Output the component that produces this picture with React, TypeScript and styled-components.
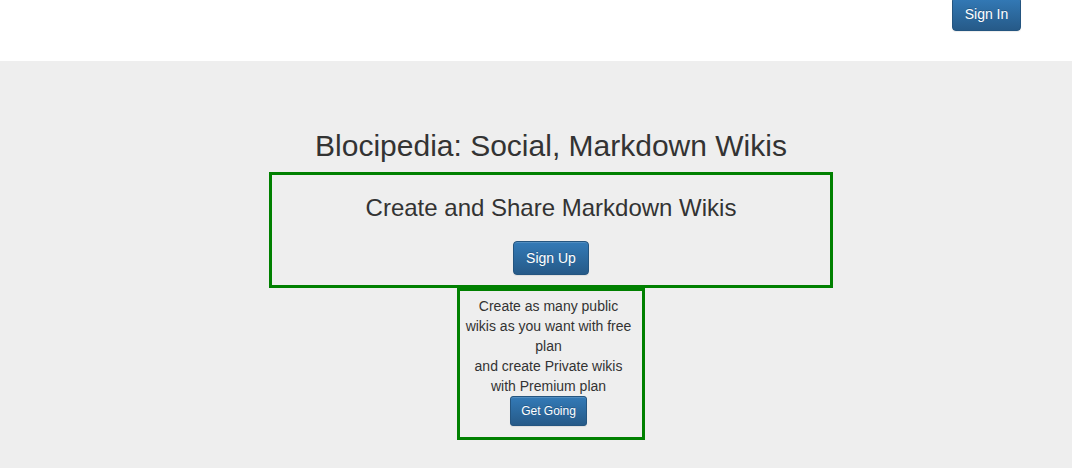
import React from "react";
import styled, { createGlobalStyle } from "styled-components";

const Global = createGlobalStyle`
  html, body { margin: 0; padding: 0; background: #ffffff; }
  body {
    font-family: "Liberation Sans", Arial, Helvetica, sans-serif;
    font-size: 14px;
    line-height: 20px;
    color: #333333;
  }
  * { box-sizing: border-box; }
`;

const Header = styled.header`
  height: 61px;
  background: #ffffff;
  display: flex;
  justify-content: flex-end;
  align-items: flex-start;
  padding-right: 51px;
`;

const Button = styled.button<{ $small?: boolean }>`
  font-family: "Liberation Sans", Arial, Helvetica, sans-serif;
  font-size: ${(p) => (p.$small ? "12px" : "14px")};
  line-height: ${(p) => (p.$small ? "18px" : "20px")};
  padding: ${(p) => (p.$small ? "5px 10px" : "6px 12px")};
  border-radius: ${(p) => (p.$small ? "3px" : "4px")};
  color: #ffffff;
  border: 1px solid #245580;
  background-color: #265a88;
  background-image: linear-gradient(to bottom, #337ab7 0, #265a88 100%);
  box-shadow: inset 0 1px 0 rgba(255, 255, 255, 0.15), 0 1px 1px rgba(0, 0, 0, 0.075);
  text-shadow: 0 -1px 0 rgba(0, 0, 0, 0.2);
  cursor: pointer;
  white-space: nowrap;
`;

const HeaderButton = styled(Button)`
  margin-top: -3px;
  width: 69px;
  padding-left: 0;
  padding-right: 0;
`;

const Jumbotron = styled.main`
  background: #eeeeee;
  min-height: 407px;
  padding: 48px 51px 0 81px;
  display: flex;
  flex-direction: column;
  align-items: center;
`;

const Title = styled.h2`
  font-size: 30px;
  font-weight: 400;
  line-height: 33px;
  margin: 20px 0 10px;
  text-align: center;
`;

const Panel = styled.section<{ $width: number }>`
  width: ${(p) => p.$width}px;
  border: 3px solid #008000;
  display: flex;
  flex-direction: column;
  align-items: center;
  text-align: center;
`;

const Lead = styled.h3`
  font-size: 24px;
  font-weight: 400;
  line-height: 26.4px;
  margin: 20px 0 10px;
`;

const SignUpRow = styled.div`
  padding: 10px 0 10px;
`;

const InfoPanel = styled(Panel)`
  padding: 5px 8px 11px 3px;
`;

const Info = styled.p`
  margin: 0;
  font-size: 14px;
  line-height: 20px;
`;

export default function App() {
  return (
    <>
      <Global />
      <Header>
        <HeaderButton>Sign In</HeaderButton>
      </Header>
      <Jumbotron>
        <Title>Blocipedia: Social, Markdown Wikis</Title>
        <Panel $width={564}>
          <Lead>Create and Share Markdown Wikis</Lead>
          <SignUpRow>
            <Button>Sign Up</Button>
          </SignUpRow>
        </Panel>
        <InfoPanel $width={188}>
          <Info>
            Create as many public wikis as you want with free plan
            <br />
            and create Private wikis with Premium plan
          </Info>
          <Button $small>Get Going</Button>
        </InfoPanel>
      </Jumbotron>
    </>
  );
}
